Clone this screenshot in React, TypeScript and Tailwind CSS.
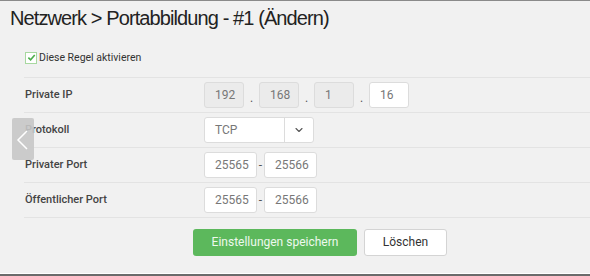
import { ChevronDown } from 'lucide-react';

function Row({ label, children }: { label: string; children: React.ReactNode }) {
    return (
        <div className="flex h-[35px] items-center border-t border-[#e3e3e3]">
            <div className="w-[180px] pl-px font-['Roboto',Arial,sans-serif] text-[11px] font-medium text-[#444]">
                {label}
            </div>
            <div className="flex items-center">{children}</div>
        </div>
    );
}

function Box({ value, disabled, w = 'w-[40px]' }: { value: string; disabled?: boolean; w?: string }) {
    return (
        <div
            className={`${w} h-[26px] rounded-[3px] border border-[#dcdcdc] pl-[10px] text-[12px] leading-[24px] text-[#777] ${
                disabled ? 'bg-[#ebebeb]' : 'bg-white'
            }`}
        >
            {value}
        </div>
    );
}

export default function App() {
    return (
        <div className="relative flex h-[276px] w-[590px] flex-col overflow-hidden bg-[#f1f1f1] font-['Roboto',Arial,sans-serif]">
            <div className="h-px bg-[#8a8a8a]" />
            <h1 className="pl-[10px] pt-[4px] font-['Liberation_Sans',Arial,sans-serif] text-[20px] leading-[26px] tracking-[-0.9px] text-[#222]">
                Netzwerk &gt; Portabbildung - #1 (Ändern)
            </h1>

            <div className="ml-[24px] mt-[19px] flex items-center gap-[2px] pl-px">
                <span className="flex h-[12px] w-[12px] items-center justify-center border border-[#a8d8a0] bg-white">
                    <svg viewBox="0 0 10 10" className="h-[9px] w-[9px]">
                        <path d="M1.5 5.2 L4 7.6 L8.6 2.2" fill="none" stroke="#4cae4c" strokeWidth="1.8" />
                    </svg>
                </span>
                <span className="text-[10.5px] text-[#333]">Diese Regel aktivieren</span>
            </div>

            <div className="ml-[24px] mt-[11px] border-b border-[#e3e3e3]">
                <Row label="Private IP">
                    <Box value="192" disabled />
                    <span className="w-[15px] pt-[6px] text-center text-[12px] text-[#555]">.</span>
                    <Box value="168" disabled />
                    <span className="w-[15px] pt-[6px] text-center text-[12px] text-[#555]">.</span>
                    <Box value="1" disabled />
                    <span className="w-[15px] pt-[6px] text-center text-[12px] text-[#555]">.</span>
                    <Box value="16" />
                </Row>
                <Row label="Protokoll">
                    <div className="flex h-[26px] w-[110px] rounded-[3px] border border-[#dcdcdc] bg-white">
                        <div className="flex-1 pl-[10px] text-[12px] leading-[24px] text-[#777]">TCP</div>
                        <div className="flex w-[29px] items-center justify-center border-l border-[#dcdcdc]">
                            <ChevronDown className="h-[12px] w-[12px] text-[#555]" strokeWidth={2.2} />
                        </div>
                    </div>
                </Row>
                <Row label="Privater Port">
                    <Box value="25565" w="w-[53px]" />
                    <span className="w-[7px] text-center text-[12px] text-[#555]">-</span>
                    <Box value="25566" w="w-[53px]" />
                </Row>
                <Row label="Öffentlicher Port">
                    <Box value="25565" w="w-[53px]" />
                    <span className="w-[7px] text-center text-[12px] text-[#555]">-</span>
                    <Box value="25566" w="w-[53px]" />
                </Row>
            </div>

            <div className="ml-[193px] mt-[11px] flex gap-[7px]">
                <button className="h-[27px] w-[164px] rounded-[3px] bg-[#5cb85c] text-[12px] text-[#eef8ee]">
                    Einstellungen speichern
                </button>
                <button className="h-[27px] w-[83px] rounded-[3px] border border-[#d4d4d4] bg-white text-[12px] text-[#333]">
                    Löschen
                </button>
            </div>

            <div className="mt-auto h-px bg-white" />
            <div className="h-[2px] bg-[#6b6b6b]" />

            {/* slider arrow overlay */}
            <div className="absolute left-[12px] top-[118px] h-[42px] w-[22px] rounded-[2px] bg-[#c6c6c6]/90">
                <svg viewBox="0 0 22 42" className="h-[42px] w-[22px]">
                    <path d="M15 13 L6 22 L15 31" fill="none" stroke="white" strokeWidth="1.5" />
                </svg>
            </div>
        </div>
    );
}
